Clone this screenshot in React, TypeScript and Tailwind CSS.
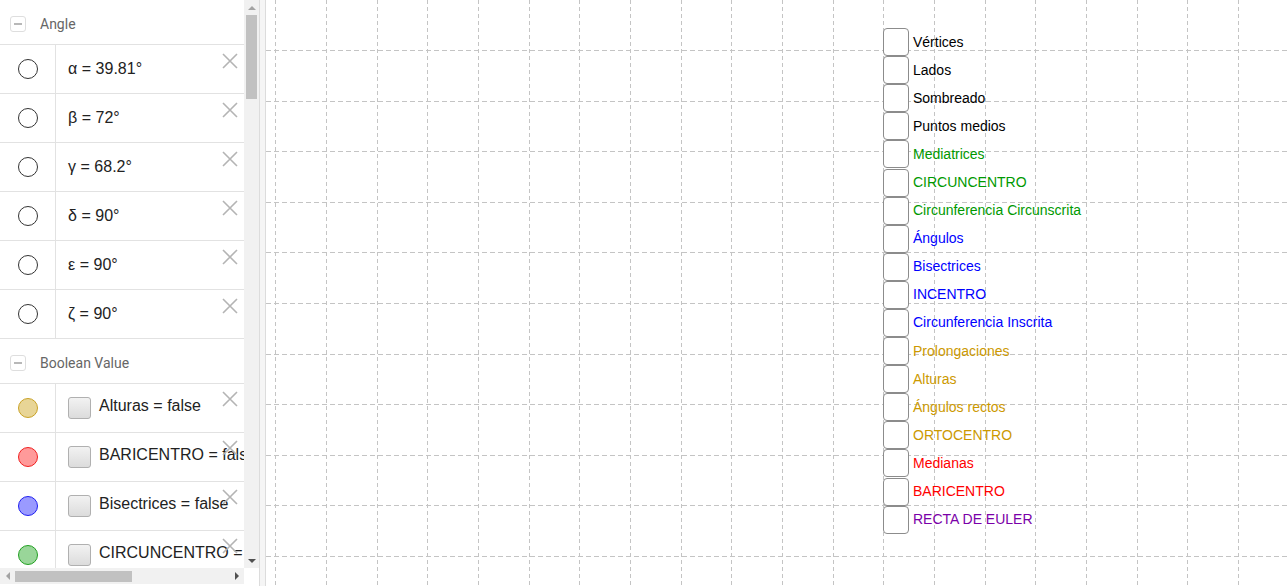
import React from 'react';

const MATH = { fontFamily: '"Liberation Sans", Arial, sans-serif' };

const angles = [
  ['α', '39.81°'],
  ['β', '72°'],
  ['γ', '68.2°'],
  ['δ', '90°'],
  ['ε', '90°'],
  ['ζ', '90°'],
];

const booleans = [
  { name: 'Alturas', fill: 'bg-[#e8d596]', border: 'border-[#c9a227]' },
  { name: 'BARICENTRO', fill: 'bg-[#ff9a9a]', border: 'border-[#f02020]' },
  { name: 'Bisectrices', fill: 'bg-[#9a9aff]', border: 'border-[#2020f0]' },
  { name: 'CIRCUNCENTRO', fill: 'bg-[#99d699]', border: 'border-[#22a022]' },
];

const checks: { label: string; color: string }[] = [
  { label: 'Vértices', color: 'text-black' },
  { label: 'Lados', color: 'text-black' },
  { label: 'Sombreado', color: 'text-black' },
  { label: 'Puntos medios', color: 'text-black' },
  { label: 'Mediatrices', color: 'text-[#009900]' },
  { label: 'CIRCUNCENTRO', color: 'text-[#009900]' },
  { label: 'Circunferencia Circunscrita', color: 'text-[#009900]' },
  { label: 'Ángulos', color: 'text-[#0000ff]' },
  { label: 'Bisectrices', color: 'text-[#0000ff]' },
  { label: 'INCENTRO', color: 'text-[#0000ff]' },
  { label: 'Circunferencia Inscrita', color: 'text-[#0000ff]' },
  { label: 'Prolongaciones', color: 'text-[#cc9900]' },
  { label: 'Alturas', color: 'text-[#cc9900]' },
  { label: 'Ángulos rectos', color: 'text-[#cc9900]' },
  { label: 'ORTOCENTRO', color: 'text-[#cc9900]' },
  { label: 'Medianas', color: 'text-[#ff0000]' },
  { label: 'BARICENTRO', color: 'text-[#ff0000]' },
  { label: 'RECTA DE EULER', color: 'text-[#7a00a8]' },
];

function CloseX({ top = 'top-[8px]' }: { top?: string }) {
  return (
    <svg className={`absolute right-[6px] ${top}`} width="16" height="16" viewBox="0 0 16 16">
      <path d="M1 1 L15 15 M15 1 L1 15" stroke="#b4b4b4" strokeWidth="1.6" fill="none" />
    </svg>
  );
}

// "name = value" with the wider math spacing round the equals sign
function Eq({ left, right, className = '' }: { left: string; right: string; className?: string }) {
  return (
    <span className={`text-[16px] text-[#222] whitespace-nowrap ${className}`} style={MATH}>
      {left}
      <span className="mx-[4.5px]">=</span>
      {right}
    </span>
  );
}

function Header({ title }: { title: string }) {
  return (
    <div className="h-[45px] pt-[4px] flex items-center border-b border-[#e2e2e2] shrink-0">
      <div className="ml-[10px] w-[16px] h-[16px] rounded-[3px] border border-[#dedede] flex items-center justify-center">
        <div className="w-[8px] h-[1.5px] bg-[#b8b8b8]" />
      </div>
      <span className="ml-[14px] text-[14px] text-[#666]" style={{ fontFamily: 'Roboto, sans-serif' }}>{title}</span>
    </div>
  );
}

function Grid() {
  const xs: number[] = [];
  const ys: number[] = [];
  for (let x = 9.3; x < 1030; x += 50.67) xs.push(x);
  for (let y = 50; y < 590; y += 50.6) ys.push(y);
  return (
    <svg className="absolute inset-0" width="1022" height="586">
      {xs.map((x) => (
        <line key={'x' + x} x1={Math.round(x) + 0.5} y1={0} x2={Math.round(x) + 0.5} y2={586} stroke="#c4c4c4" strokeDasharray="4 3" />
      ))}
      {ys.map((y) => (
        <line key={'y' + y} x1={0} y1={Math.round(y) + 0.5} x2={1022} y2={Math.round(y) + 0.5} stroke="#c4c4c4" strokeDasharray="5 3" />
      ))}
    </svg>
  );
}

export default function App() {
  return (
    <div className="w-[1288px] h-[586px] flex bg-white overflow-hidden">
      {/* Algebra view */}
      <div className="w-[259px] h-full flex flex-col shrink-0">
        <div className="flex h-[568px]">
          <div className="w-[244px] h-full overflow-hidden flex flex-col">
            <Header title="Angle" />
            {angles.map(([n, v]) => (
              <div key={n} className="h-[49px] flex border-b border-[#e2e2e2] shrink-0 relative">
                <div className="w-[56px] border-r border-[#e2e2e2] flex items-center justify-center">
                  <div className="w-[20px] h-[20px] rounded-full border border-[#333]" />
                </div>
                <div className="flex items-center pl-[12px]">
                  <Eq left={n} right={v} />
                </div>
                <CloseX />
              </div>
            ))}
            <Header title="Boolean Value" />
            {booleans.map((b) => (
              <div key={b.name} className="h-[49px] flex border-b border-[#e2e2e2] shrink-0 relative">
                <div className="w-[56px] border-r border-[#e2e2e2] flex items-center justify-center shrink-0">
                  <div className={`w-[20px] h-[20px] rounded-full border ${b.fill} ${b.border}`} />
                </div>
                <div className="flex items-center pl-[12px] gap-[8px] whitespace-nowrap">
                  <div className="w-[23px] h-[22px] rounded-[3px] border border-[#b0b0b0] bg-gradient-to-b from-[#f2f2f2] to-[#dcdcdc] shrink-0" />
                  <Eq left={b.name} right="false" className="mb-[5px]" />
                </div>
                <CloseX top="top-[7px]" />
              </div>
            ))}
          </div>
          {/* vertical scrollbar */}
          <div className="w-[15px] h-full bg-[#f1f1f1] flex flex-col items-center">
            <div className="h-[15px] flex items-center justify-center">
              <div className="w-0 h-0 border-l-[4px] border-r-[4px] border-b-[4px] border-l-transparent border-r-transparent border-b-[#a3a3a3]" />
            </div>
            <div className="w-[11px] h-[84px] bg-[#c1c1c1]" />
            <div className="flex-1" />
            <div className="h-[15px] flex items-center justify-center">
              <div className="w-0 h-0 border-l-[4px] border-r-[4px] border-t-[4px] border-l-transparent border-r-transparent border-t-[#505050]" />
            </div>
          </div>
        </div>
        {/* horizontal scrollbar */}
        <div className="flex h-[16px]">
          <div className="w-[244px] h-full bg-[#f1f1f1] flex items-center">
            <div className="w-[15px] flex items-center justify-center">
              <div className="w-0 h-0 border-t-[4px] border-b-[4px] border-r-[4px] border-t-transparent border-b-transparent border-r-[#a3a3a3]" />
            </div>
            <div className="w-[117px] h-[11px] bg-[#c1c1c1]" />
            <div className="flex-1" />
            <div className="w-[15px] flex items-center justify-center">
              <div className="w-0 h-0 border-t-[4px] border-b-[4px] border-l-[4px] border-t-transparent border-b-transparent border-l-[#505050]" />
            </div>
          </div>
        </div>
      </div>

      {/* splitter */}
      <div className="w-[7px] h-full border-l border-r border-[#dcdcdc] bg-[#f5f5f5] shrink-0" />

      {/* Graphics view */}
      <div className="relative flex-1 h-full overflow-hidden">
        <Grid />
        <div className="absolute left-[617px] top-[28px] flex flex-col">
          {checks.map((c) => (
            <div key={c.label} className="h-[28.1px] flex items-center">
              <div className="w-[26px] h-[28px] rounded-[4px] border-[1.5px] border-[#8c8c8c] bg-white shrink-0" />
              <span className={`ml-[4px] text-[14px] whitespace-nowrap ${c.color}`} style={{ fontFamily: '"Liberation Sans", Arial, sans-serif' }}>
                {c.label}
              </span>
            </div>
          ))}
        </div>
      </div>
    </div>
  );
}
